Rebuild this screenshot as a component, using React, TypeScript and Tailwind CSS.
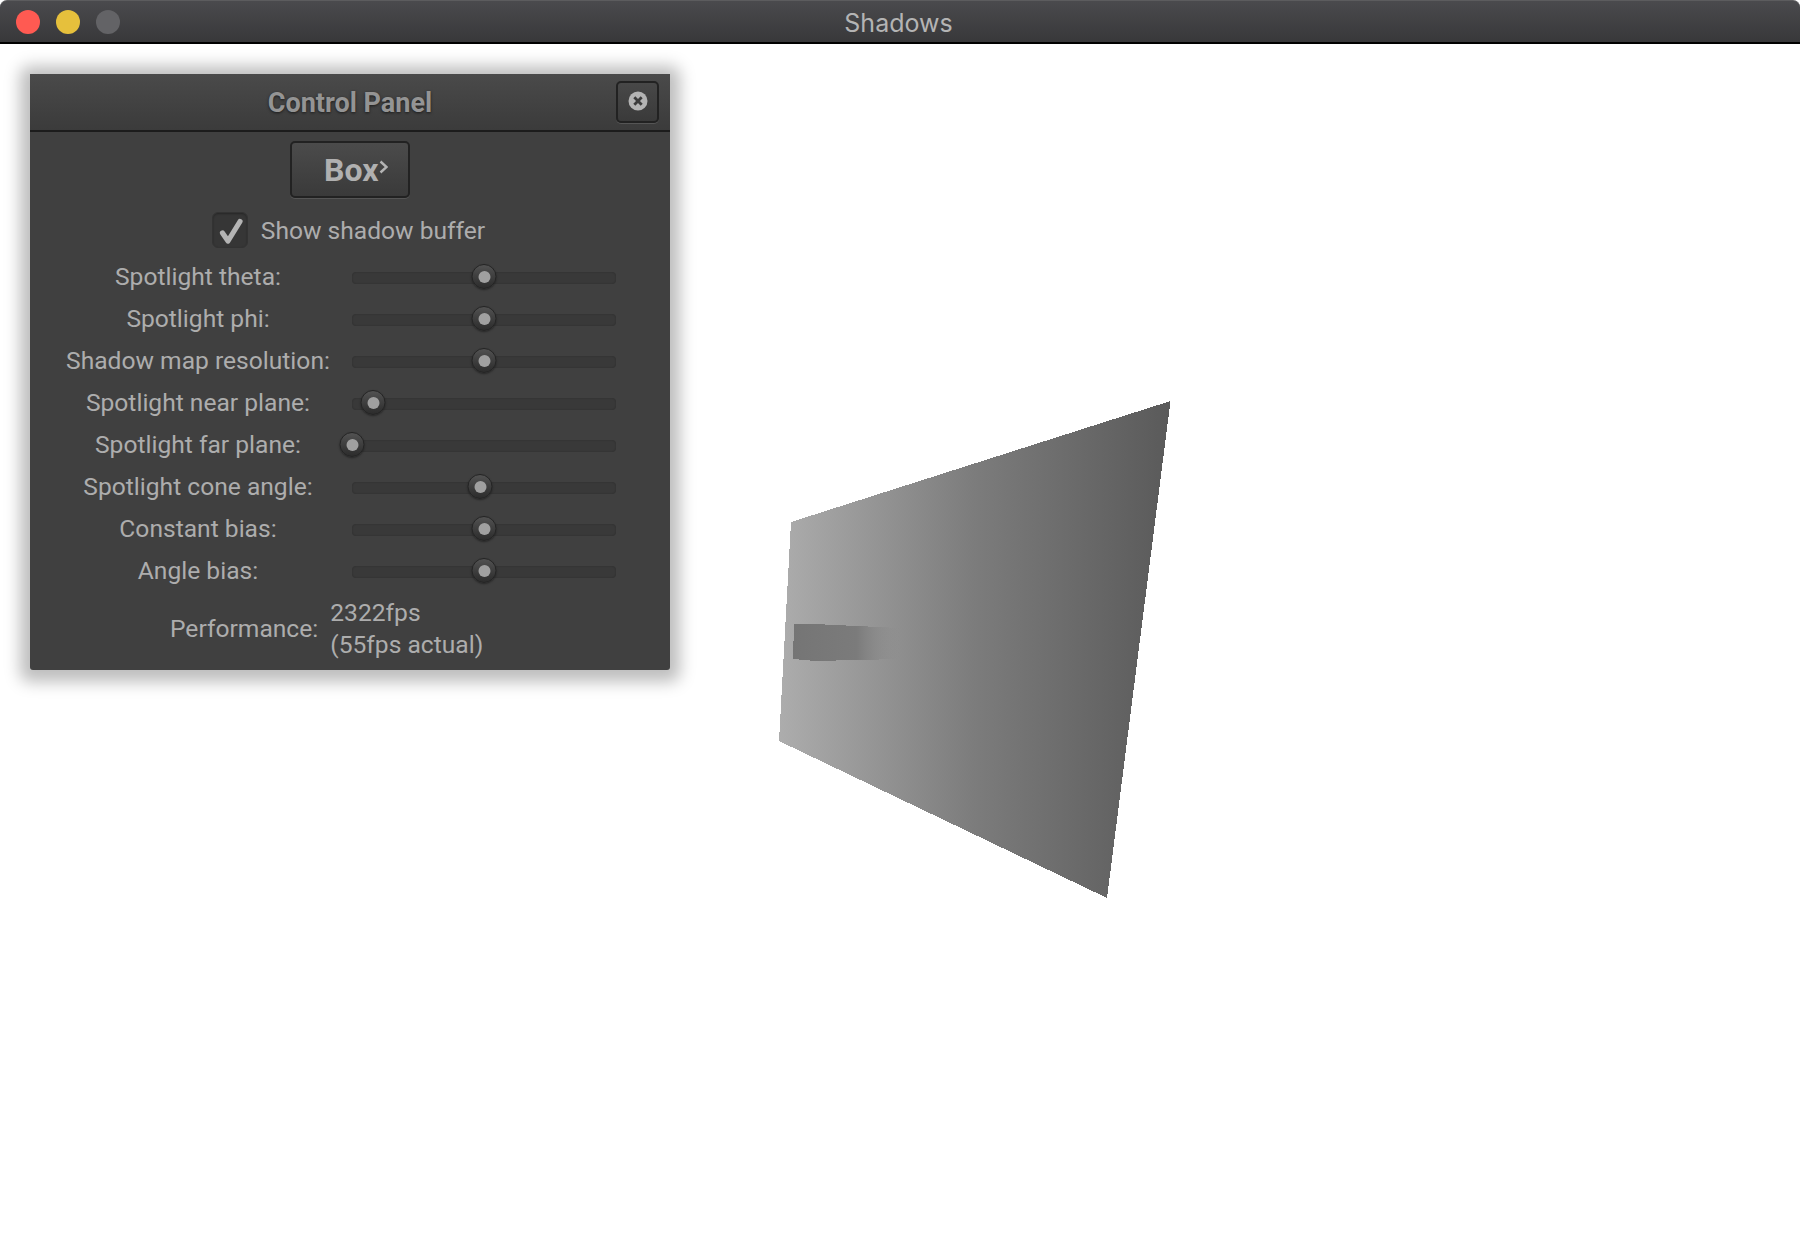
const SLIDERS: { label: string; value: number }[] = [
  { label: "Spotlight theta:", value: 0.5 },
  { label: "Spotlight phi:", value: 0.5 },
  { label: "Shadow map resolution:", value: 0.5 },
  { label: "Spotlight near plane:", value: 0.08 },
  { label: "Spotlight far plane:", value: 0 },
  { label: "Spotlight cone angle:", value: 0.485 },
  { label: "Constant bias:", value: 0.5 },
  { label: "Angle bias:", value: 0.5 },
];

function Slider({ value }: { value: number }) {
  return (
    <div className="relative mt-[2px] h-3 w-[264px] rounded-[4px] bg-[#393939] shadow-[inset_0_0_2px_rgba(0,0,0,0.25)]">
      <div
        className="absolute top-[-8px] flex h-[25px] w-[25px] -translate-x-1/2 items-center justify-center rounded-full border border-[#242424] bg-gradient-to-b from-[#525252] to-[#2c2c2c] shadow-[0_1px_2px_rgba(0,0,0,0.4)]"
        style={{ left: `${value * 100}%` }}
      >
        <div className="h-3 w-3 rounded-full bg-[#a0a0a0]" />
      </div>
    </div>
  );
}

function Scene() {
  return (
    <svg className="absolute left-0 top-0" width="1800" height="1200" viewBox="0 44 1800 1200" shapeRendering="crispEdges">
      <defs>
        <linearGradient id="plane" gradientUnits="userSpaceOnUse" x1="778" y1="0" x2="1170" y2="0">
          <stop offset="0" stopColor="#adadad" />
          <stop offset="0.5" stopColor="#7c7c7c" />
          <stop offset="1" stopColor="#5a5a5a" />
        </linearGradient>
        <linearGradient id="shade" gradientUnits="userSpaceOnUse" x1="792" y1="0" x2="900" y2="0">
          <stop offset="0" stopColor="#757575" />
          <stop offset="0.6" stopColor="#7b7b7b" />
          <stop offset="1" stopColor="#8c8c8c" stopOpacity="0" />
        </linearGradient>
      </defs>
      <polygon points="791,522 1170.5,401 1107,898 779,741" fill="url(#plane)" />
      <polygon points="794,624 814,624 900,628 900,659 815,661 793,659" fill="url(#shade)" />
    </svg>
  );
}

export default function App() {
  return (
    <div className="h-[1244px] w-[1800px] overflow-hidden bg-white font-['Roboto',sans-serif]">
      <div className="relative z-10 flex h-11 items-center rounded-t-[7px] border-b-2 border-t border-b-black border-t-[#5c5c5e] bg-gradient-to-b from-[#4a4a4d] to-[#38383a]">
        <div className="flex gap-4 pl-4">
          <div className="h-6 w-6 rounded-full bg-[#ff5a52]" />
          <div className="h-6 w-6 rounded-full bg-[#e6c03c]" />
          <div className="h-6 w-6 rounded-full bg-[#636366]" />
        </div>
        <div className="absolute inset-x-0 top-[4px] pr-[3px] text-center font-['Inter',sans-serif] text-[25px] leading-[36px] text-[#b4b4b4]">Shadows</div>
      </div>

      <div className="relative pl-[30px] pt-[30px]">
        <Scene />
        <div className="relative h-[596px] w-[640px] rounded-[3px] bg-[#404040] text-[24.6px] text-[#adadad] shadow-[0_2px_16px_10px_rgba(0,0,0,0.26)]">
          <div className="relative flex h-[58px] items-center justify-center border-b-2 border-[#1c1c1c] bg-gradient-to-b from-[#4a4a4a] to-[#3b3b3b] pt-[2px]">
            <span className="text-[27px] font-bold text-[#949494] [text-shadow:0_1px_3px_rgba(0,0,0,0.6)]">Control Panel</span>
            <button className="absolute right-[11px] top-[7px] flex h-[42px] w-[43px] items-center justify-center rounded-[5px] border-2 border-[#222] bg-gradient-to-b from-[#484848] to-[#3a3a3a] shadow-[0_1px_0_#555]">
              <svg width="20" height="20" viewBox="0 0 20 20" className="-translate-y-[1px]">
                <circle cx="10" cy="10" r="9.5" fill="#b4b4b4" />
                <path d="M6.3 6.3 13.7 13.7M13.7 6.3 6.3 13.7" stroke="#3c3c3c" strokeWidth="2.8" />
              </svg>
            </button>
          </div>

          <div className="flex flex-col items-center pt-[9px]">
            <button className="relative flex h-[57px] w-[120px] items-center rounded-[5px] border-2 border-[#222] bg-gradient-to-b from-[#4b4b4b] to-[#3a3a3a] pl-[32px] shadow-[0_1px_0_#555]">
              <span className="text-[32px] font-bold text-[#b0b0b0]">Box</span>
              <svg className="mb-[5px] ml-[1px]" width="9" height="14" viewBox="0 0 9 14" fill="none">
                <path d="M1.5 1.5 7.5 7 1.5 12.5" stroke="#b4b4b4" strokeWidth="2.4" />
              </svg>
            </button>

            <div className="mt-[14px] flex h-9 items-center gap-[13px] pr-[3px]">
              <div className="flex h-9 w-9 items-center justify-center rounded-[6px] border border-[#333] bg-[#363636] shadow-[inset_0_1px_2px_rgba(0,0,0,0.3)]">
                <svg width="36" height="36" viewBox="0 0 36 36" fill="none" className="shrink-0">
                  <path d="M10.5 21 16 29 28 9.5" stroke="#b4b4b4" strokeWidth="5.2" strokeLinecap="round" strokeLinejoin="round" />
                </svg>
              </div>
              <span className="translate-y-[1px]">Show shadow buffer</span>
            </div>
          </div>

          <div className="mt-2 grid grid-cols-[264px_264px] gap-x-[22px] pl-9">
            {SLIDERS.map((s) => (
              <div key={s.label} className="col-span-2 grid h-[42px] grid-cols-subgrid items-center">
                <span className="whitespace-nowrap text-center">{s.label}</span>
                <Slider value={s.value} />
              </div>
            ))}
          </div>

          <div className="mt-[5px] flex items-center gap-[12px] pl-[140px] leading-[32px]">
            <span>Performance:</span>
            <div>
              <div>2322fps</div>
              <div>(55fps actual)</div>
            </div>
          </div>
        </div>
      </div>
    </div>
  );
}
